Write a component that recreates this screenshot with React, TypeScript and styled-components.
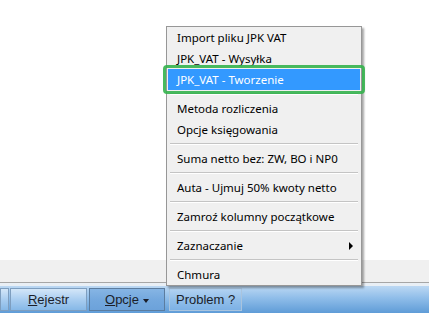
import React from "react";
import styled, { createGlobalStyle, css } from "styled-components";

const GlobalStyle = createGlobalStyle`
  html, body {
    margin: 0;
    padding: 0;
    background: #fff;
  }
  body {
    width: 429px;
    height: 313px;
    overflow: hidden;
  }
`;

const Screen = styled.div`
  position: relative;
  width: 429px;
  height: 313px;
  display: flex;
  flex-direction: column;
  overflow: hidden;
`;

const Workspace = styled.div`
  flex: 1;
  background: #fff;
`;

const Strip = styled.div`
  height: 22px;
  background: #f0f0f0;
  border-bottom: 1px solid #a6a6a6;
`;

const StripGap = styled.div`
  height: 3px;
  background: #e9eff5;
`;

const ButtonBar = styled.div`
  height: 27px;
  box-sizing: border-box;
  padding-top: 2px;
  display: flex;
  align-items: flex-start;
  background: linear-gradient(#bcd8f3, #8fbde9 45%, #5f9cd7);
`;

type Variant = "normal" | "pressed" | "flat";

const BarButton = styled.div<{ $w: number; $ml?: number; $variant?: Variant }>`
  box-sizing: border-box;
  width: ${(p) => p.$w}px;
  margin-left: ${(p) => p.$ml ?? 0}px;
  height: 23px;
  display: flex;
  align-items: center;
  justify-content: center;
  font-family: "Liberation Sans", Arial, sans-serif;
  font-size: 13px;
  color: #1b1e2a;
  border: 1px solid #7e9ebf;
  background: linear-gradient(#d3e6f8, #a9cdf0 50%, #86b8e7);
  ${(p) =>
    p.$variant === "pressed" &&
    css`
      border-color: #5b7c9f;
      background: linear-gradient(#86b5e4, #74a8de 50%, #6ca2da);
    `}
  ${(p) =>
    p.$variant === "flat" &&
    css`
      justify-content: flex-start;
      padding-left: 6px;
      border-color: #a9c4de;
      background: linear-gradient(#b2d2f2, #92bfea 50%, #7db1e5);
    `}
`;

const Key = styled.span`
  text-decoration: underline;
`;

const DropMark = styled.span`
  display: inline-block;
  margin-left: 4px;
  margin-top: 2px;
  border-top: 4px solid #1b1e2a;
  border-left: 3.5px solid transparent;
  border-right: 3.5px solid transparent;
`;

const Menu = styled.div`
  position: absolute;
  left: 166px;
  top: 26px;
  width: 196px;
  box-sizing: border-box;
  padding: 0 1px;
  background: #f0f0f0;
  border: 1px solid #979797;
  box-shadow: 2px 2px 2px rgba(0, 0, 0, 0.35);
  font-family: "Noto Sans", "Segoe UI", sans-serif;
  font-size: 11.5px;
  color: #000;
`;

const Item = styled.div<{ $active?: boolean }>`
  position: relative;
  height: 21px;
  line-height: 21px;
  padding-left: 9px;
  white-space: nowrap;
  ${(p) =>
    p.$active &&
    css`
      background: #3399ff;
      color: #fff;
    `}
`;

const Focus = styled.div`
  position: absolute;
  left: -5px;
  right: -5px;
  top: -4px;
  bottom: -4px;
  border: 3px solid rgba(52, 178, 76, 0.9);
  border-radius: 4px;
`;

const Separator = styled.div`
  height: 8px;
  display: flex;
  align-items: center;
  padding: 0 2px;
  &::after {
    content: "";
    flex: 1;
    border-top: 1px solid #c4c4c4;
    border-bottom: 1px solid #fff;
  }
`;

const SubArrow = styled.span`
  position: absolute;
  right: 7px;
  top: 7px;
  border-left: 4px solid #000;
  border-top: 4px solid transparent;
  border-bottom: 4px solid transparent;
`;

export default function App() {
  return (
    <Screen>
      <GlobalStyle />
      <Workspace />
      <Strip />
      <StripGap />
      <ButtonBar>
        <BarButton $w={9} />
        <BarButton $w={77} $ml={1}>
          <span>
            <Key>R</Key>ejestr
          </span>
        </BarButton>
        <BarButton $w={76} $ml={2} $variant="pressed">
          <span>
            <Key>O</Key>pcje
          </span>
          <DropMark />
        </BarButton>
        <BarButton $w={73} $ml={4} $variant="flat">
          Problem ?
        </BarButton>
      </ButtonBar>

      <Menu>
        <Item>Import pliku JPK VAT</Item>
        <Item>JPK_VAT - Wysyłka</Item>
        <Item $active>
          JPK_VAT - Tworzenie
          <Focus />
        </Item>
        <Separator />
        <Item>Metoda rozliczenia</Item>
        <Item>Opcje księgowania</Item>
        <Separator />
        <Item>Suma netto bez: ZW, BO i NP0</Item>
        <Separator />
        <Item>Auta - Ujmuj 50% kwoty netto</Item>
        <Separator />
        <Item>Zamroź kolumny początkowe</Item>
        <Separator />
        <Item>
          Zaznaczanie
          <SubArrow />
        </Item>
        <Separator />
        <Item>Chmura</Item>
      </Menu>
    </Screen>
  );
}
